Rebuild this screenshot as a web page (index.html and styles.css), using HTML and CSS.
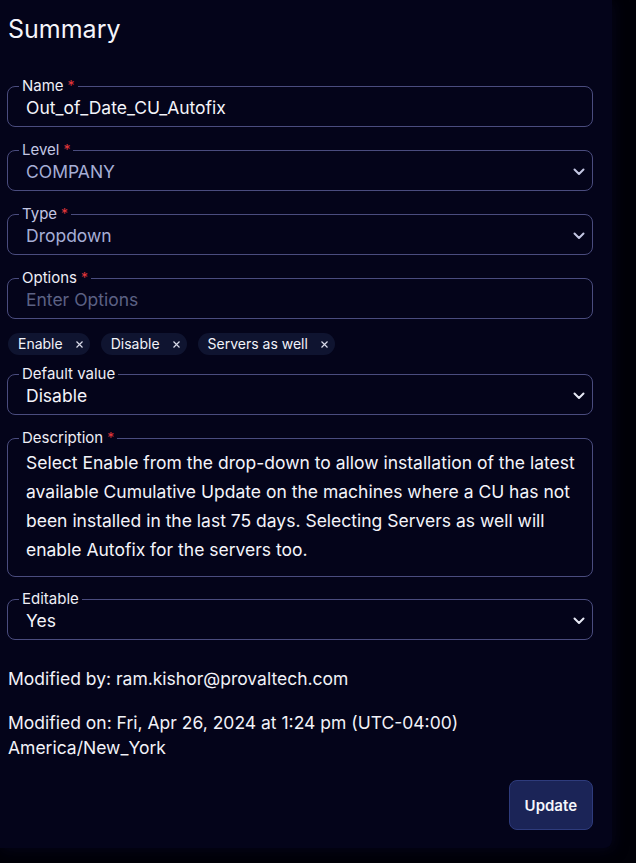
FILE: index.html
```html
<!DOCTYPE html>
<html lang="en">
<head>
<meta charset="utf-8">
<title>Summary</title>
<link rel="stylesheet" href="styles.css">
</head>
<body>
<div class="panel">
  <h1 class="title">Summary</h1>

  <fieldset class="field">
    <legend class="label">Name<span class="req">*</span></legend>
    <div class="value">Out_of_Date_CU_Autofix</div>
  </fieldset>

  <fieldset class="field">
    <legend class="label label-dim">Level<span class="req">*</span></legend>
    <div class="value value-dim">
      <span class="value-text">COMPANY</span>
      <svg class="chev" width="12" height="8" viewBox="0 0 12 8"><path d="M1.5 1.5 L6 6 L10.5 1.5" fill="none" stroke="#c3c6e2" stroke-width="2" stroke-linecap="round" stroke-linejoin="round"/></svg>
    </div>
  </fieldset>

  <fieldset class="field">
    <legend class="label label-dim">Type<span class="req">*</span></legend>
    <div class="value value-dim">
      <span class="value-text">Dropdown</span>
      <svg class="chev" width="12" height="8" viewBox="0 0 12 8"><path d="M1.5 1.5 L6 6 L10.5 1.5" fill="none" stroke="#c3c6e2" stroke-width="2" stroke-linecap="round" stroke-linejoin="round"/></svg>
    </div>
  </fieldset>

  <fieldset class="field">
    <legend class="label">Options<span class="req">*</span></legend>
    <div class="value value-placeholder">Enter Options</div>
  </fieldset>

  <div class="chips">
    <span class="chip">Enable<svg class="chip-x" width="7" height="7" viewBox="0 0 7 7"><path d="M0.5 0.5 L6.5 6.5 M6.5 0.5 L0.5 6.5" stroke="#d8dae8" stroke-width="1.2"/></svg></span>
    <span class="chip">Disable<svg class="chip-x" width="7" height="7" viewBox="0 0 7 7"><path d="M0.5 0.5 L6.5 6.5 M6.5 0.5 L0.5 6.5" stroke="#d8dae8" stroke-width="1.2"/></svg></span>
    <span class="chip">Servers as well<svg class="chip-x" width="7" height="7" viewBox="0 0 7 7"><path d="M0.5 0.5 L6.5 6.5 M6.5 0.5 L0.5 6.5" stroke="#d8dae8" stroke-width="1.2"/></svg></span>
  </div>

  <fieldset class="field">
    <legend class="label">Default value</legend>
    <div class="value">
      <span class="value-text">Disable</span>
      <svg class="chev" width="12" height="8" viewBox="0 0 12 8"><path d="M1.5 1.5 L6 6 L10.5 1.5" fill="none" stroke="#e6e8f4" stroke-width="2" stroke-linecap="round" stroke-linejoin="round"/></svg>
    </div>
  </fieldset>

  <fieldset class="field field-desc">
    <legend class="label">Description<span class="req">*</span></legend>
    <div class="value value-multi">Select Enable from the drop-down to allow installation of the latest<br>available Cumulative Update on the machines where a CU has not<br>been installed in the last 75 days. Selecting Servers as well will<br>enable Autofix for the servers too.</div>
  </fieldset>

  <fieldset class="field">
    <legend class="label">Editable</legend>
    <div class="value">
      <span class="value-text">Yes</span>
      <svg class="chev" width="12" height="8" viewBox="0 0 12 8"><path d="M1.5 1.5 L6 6 L10.5 1.5" fill="none" stroke="#e6e8f4" stroke-width="2" stroke-linecap="round" stroke-linejoin="round"/></svg>
    </div>
  </fieldset>

  <p class="meta meta-by">Modified by: ram.kishor@provaltech.com</p>
  <p class="meta meta-on">Modified on: Fri, Apr 26, 2024 at 1:24 pm (UTC-04:00)<br>America/New_York</p>

  <button class="btn" type="button">Update</button>
</div>
</body>
</html>
```

FILE: styles.css
```css
* {
  box-sizing: border-box;
}

html, body {
  margin: 0;
  padding: 0;
  background: #010108;
}

body {
  font-family: Inter, "Noto Sans", "Liberation Sans", sans-serif;
  color: #f3f3f9;
  width: 636px;
  height: 863px;
  overflow: hidden;
}

.panel {
  width: 612px;
  height: 848px;
  background: #04041a;
  border-radius: 0 0 8px 0;
  box-shadow: 2px 2px 14px rgba(10, 10, 40, 0.55);
  padding: 13px 19px 18px 7px;
  display: flex;
  flex-direction: column;
}

.title {
  margin: 0 0 33px 0;
  font-size: 25px;
  line-height: 32px;
  font-weight: 400;
  color: #f5f5fb;
  padding-left: 1px;
}

.field {
  margin: 0 0 15px 0;
  padding: 2px 0 6px 0;
  border: 1px solid #4a4c7e;
  border-radius: 8px;
  min-width: 0;
}

.field-desc {
  margin-bottom: 14px;
  padding-top: 0;
  padding-bottom: 12px;
}

.label {
  margin-left: 11px;
  padding: 0 3px;
  font-size: 15px;
  line-height: 16px;
  color: #eeeef6;
}

.label-dim {
  color: #c3c7e3;
}

.req {
  color: #e5373a;
  margin-left: 4px;
  font-size: 14px;
}

.value {
  display: flex;
  align-items: center;
  justify-content: space-between;
  padding: 0 7px 0 18px;
  font-size: 17.5px;
  line-height: 24px;
  height: 24px;
  color: #f4f4fa;
  white-space: nowrap;
}

.value-dim {
  color: #a6aed6;
}

.value-placeholder {
  color: #5c6184;
}

.value-multi {
  display: block;
  height: auto;
  padding-top: 2px;
  padding-right: 10px;
  line-height: 29px;
}

.chev {
  flex: none;
  display: block;
}

.chips {
  display: flex;
  gap: 11px;
  margin: -1px 0 11px 1px;
}

.chip {
  display: inline-flex;
  align-items: center;
  height: 22px;
  padding: 0 7px 0 10px;
  border-radius: 11px;
  background: #0f1430;
  font-size: 14px;
  line-height: 22px;
  color: #f2f2f8;
}

.chip-x {
  margin-left: 13px;
  display: block;
}

.meta {
  margin: 0;
  font-size: 17.5px;
  line-height: 25px;
  color: #f2f2f8;
  padding-left: 1px;
}

.meta-by {
  margin-top: 11px;
}

.meta-on {
  margin-top: 19px;
}

.btn {
  align-self: flex-end;
  margin-top: 20px;
  height: 50px;
  padding: 0 15px;
  background: #1b2457;
  border: 1px solid #2e3b7c;
  border-radius: 8px;
  color: #f6f6fc;
  font-family: Inter, "Noto Sans", "Liberation Sans", sans-serif;
  font-size: 15px;
  font-weight: 600;
}
```
